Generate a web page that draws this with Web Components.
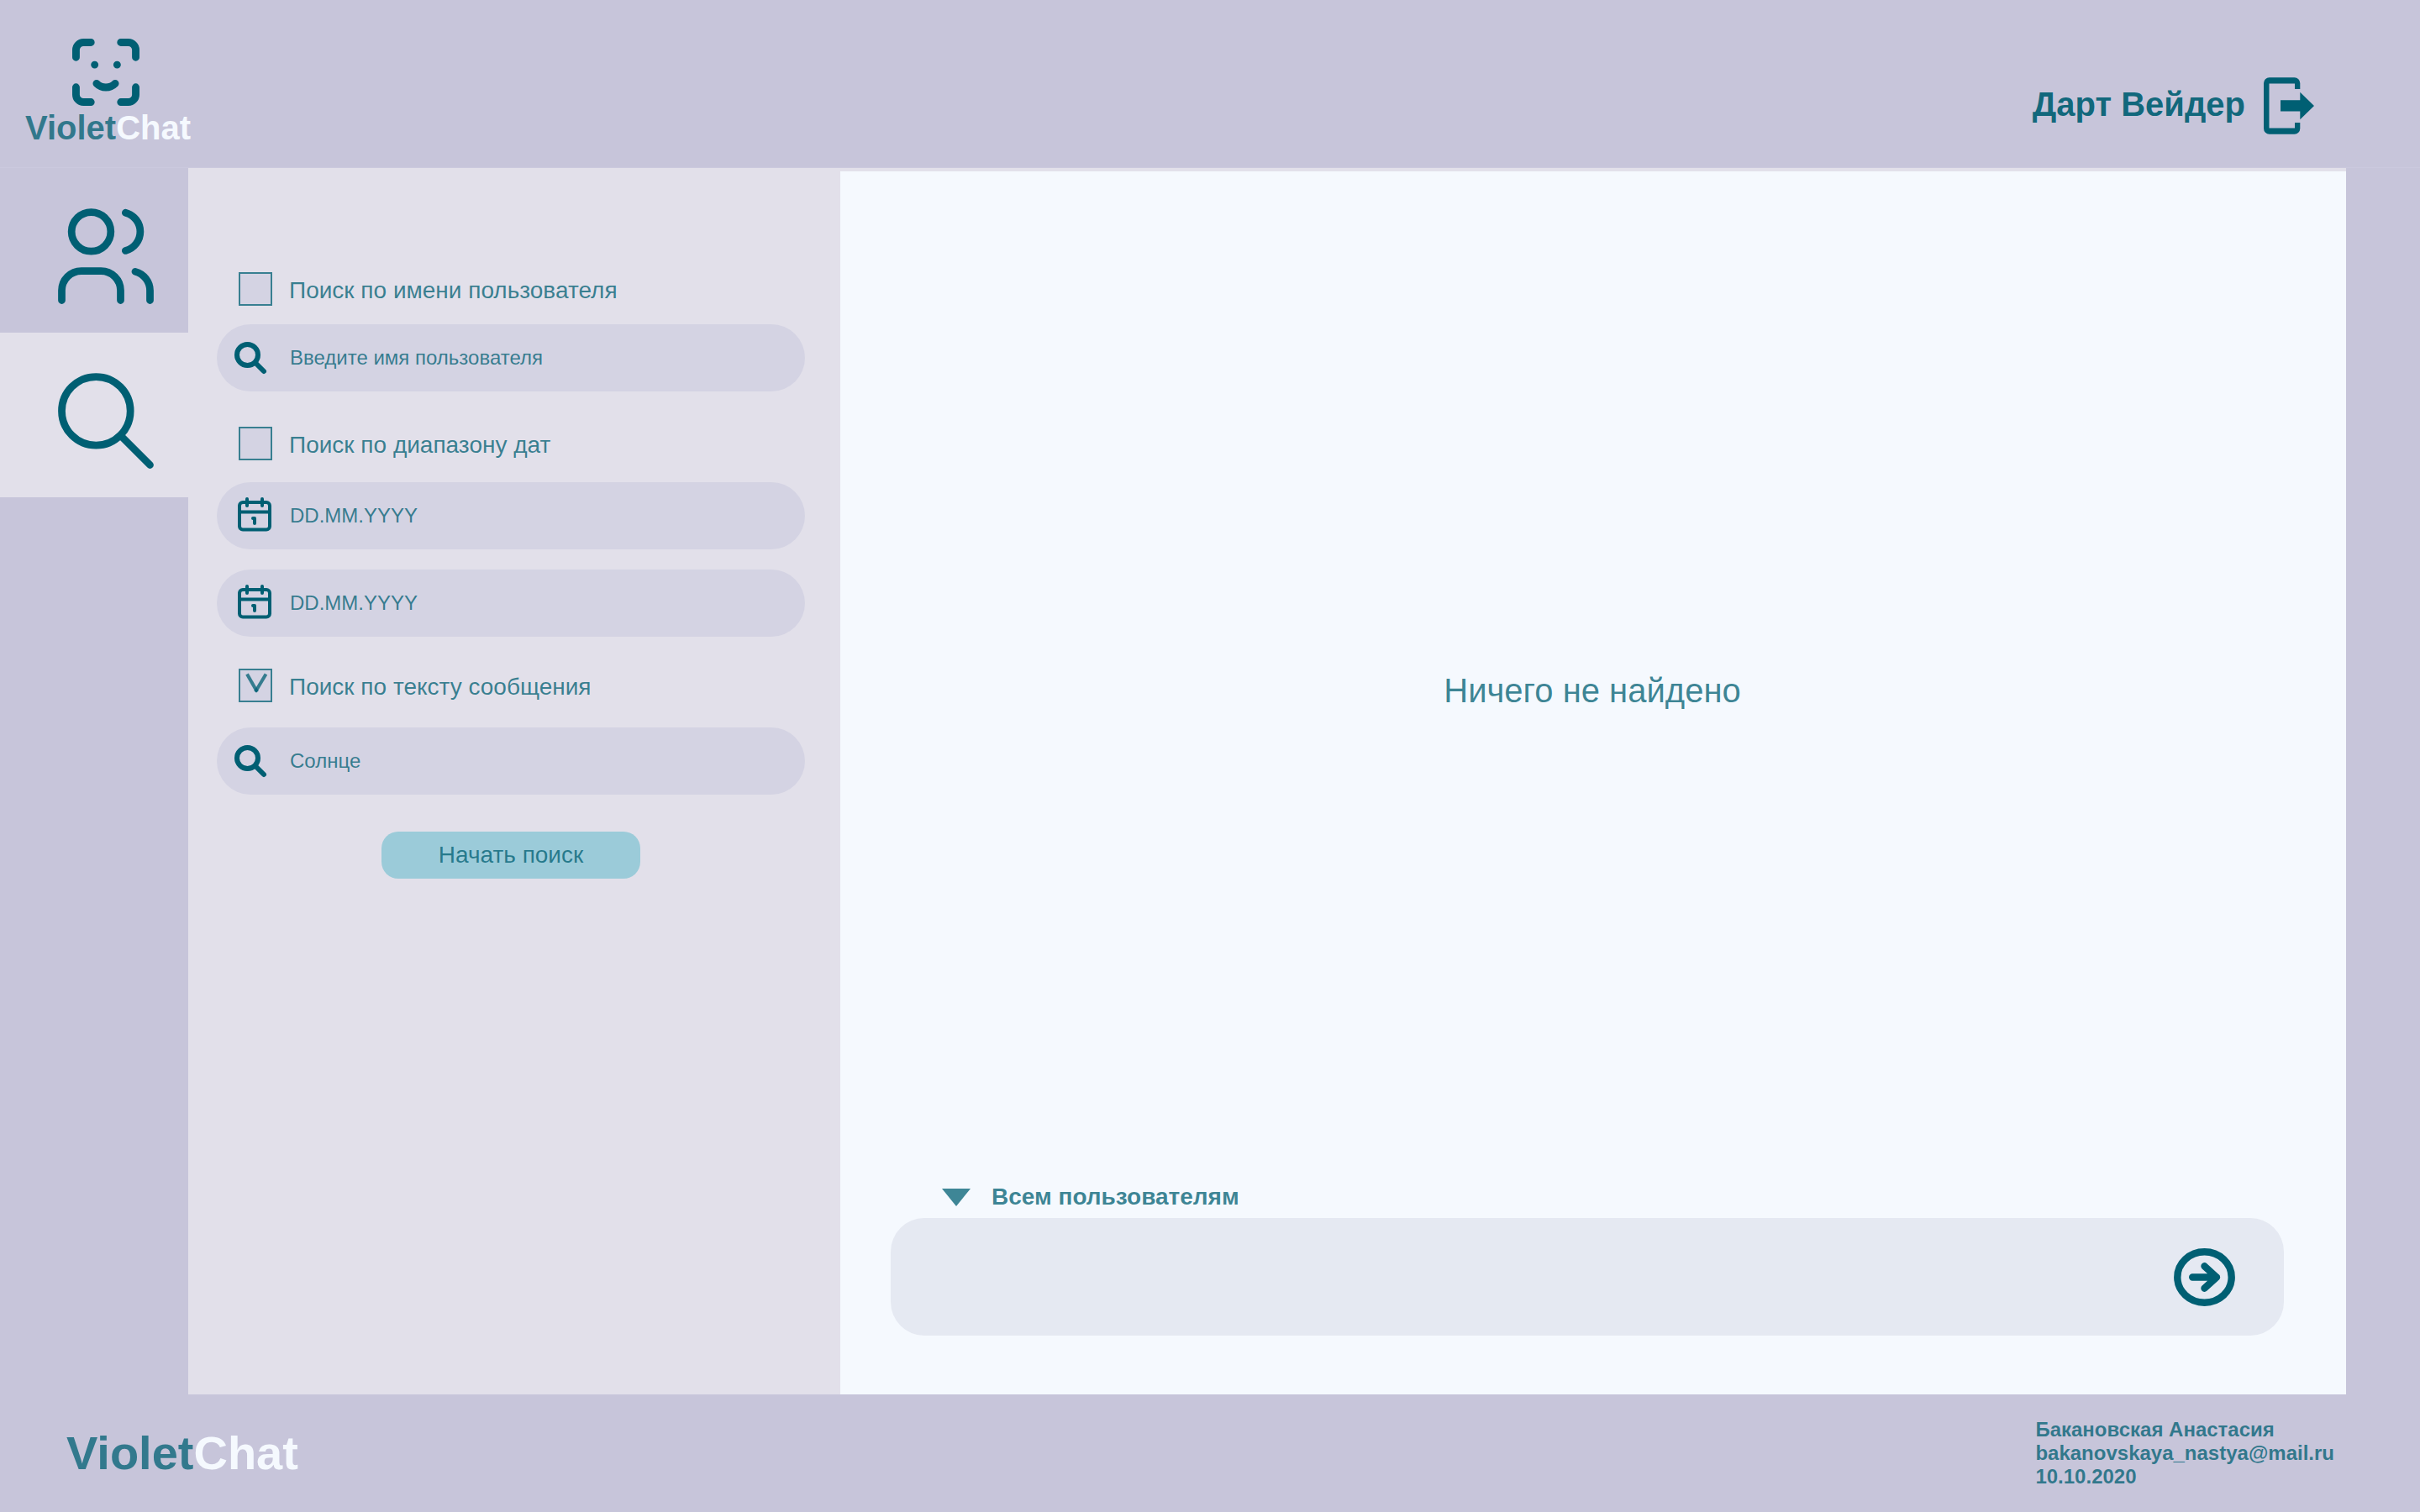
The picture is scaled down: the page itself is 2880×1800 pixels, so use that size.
<!DOCTYPE html>
<html lang="ru">
<head>
<meta charset="utf-8">
<meta name="viewport" content="width=device-width, initial-scale=1">
<title>VioletChat</title>
<style>
  :root {
    --lilac: #c7c5da;
    --panel: #e2e0ea;
    --field: #d4d3e3;
    --paper: #f5f9fe;
    --composer: #e5e9f2;
    --teal: #005f73;
    --teal-soft: rgba(0, 95, 115, .75);
    --button: #9bcbd9;
  }
  body {
    margin: 0;
    background: var(--lilac);
    color: var(--teal-soft);
    font: 28px/44px "Liberation Sans", Arial, sans-serif;
  }
</style>
</head>
<body>
<violet-app></violet-app>

<script>
  const base = `<style>
    *, *::before, *::after { box-sizing: border-box; }
    svg { display: block; flex: none; }
    input, button, select { font: inherit; color: inherit; margin: 0; padding: 0; border: 0; background: none; outline-offset: 4px; }
    button, select, a { cursor: pointer; }
  </style>`;

  function define(name, markup, setup) {
    const template = document.createElement('template');
    customElements.define(name, class extends HTMLElement {
      constructor() {
        super();
        this.attachShadow({ mode: 'open' });
      }
      connectedCallback() {
        if (this.shadowRoot.childNodes.length) return;
        template.innerHTML = base + markup;
        this.shadowRoot.append(template.content.cloneNode(true));
        if (setup) setup(this, this.shadowRoot);
      }
    });
  }

  const icons = {
    face: `<svg width="80" height="80" viewBox="3 3 18 18" fill="none" stroke="#005f73" stroke-width="2" stroke-linecap="round" stroke-linejoin="round">
      <path d="M4 8V6a2 2 0 0 1 2-2h2M4 16v2a2 2 0 0 0 2 2h2M16 4h2a2 2 0 0 1 2 2v2M16 20h2a2 2 0 0 0 2-2v-2M9 10h.01M15 10h.01M9.5 15a3.5 3.5 0 0 0 5 0"/></svg>`,
    exit: `<svg width="60" height="68" viewBox="0 0 60 68" fill="#005f73">
      <path d="M43.3 14V7A6.7 6.7 0 0 0 36.6.3H6.7A6.7 6.7 0 0 0 0 7v54a6.7 6.7 0 0 0 6.7 6.7h29.9a6.7 6.7 0 0 0 6.7-6.7v-7H37v6.5H6.5v-53H37V14Z"/>
      <path d="M20 27.3h23.3v-9.6L60 34 43.3 50.3v-9.8H20Z"/></svg>`,
    users: `<svg width="140" height="140" viewBox="0 0 24 24" fill="none" stroke="#005f73" stroke-width="1.5" stroke-linecap="round" stroke-linejoin="round">
      <circle cx="9" cy="7" r="4"/><path d="M3 21v-2a4 4 0 0 1 4-4h4a4 4 0 0 1 4 4v2M16 3.13a4 4 0 0 1 0 7.75M21 21v-2a4 4 0 0 0-3-3.85"/></svg>`,
    find: `<svg width="140" height="140" viewBox="0 0 24 24" fill="none" stroke="#005f73" stroke-width="1.5" stroke-linecap="round">
      <circle cx="10" cy="10" r="7"/><path d="M21 21l-6-6"/></svg>`,
    search: `<svg width="48" height="48" viewBox="0 0 48 48" fill="none" stroke="#005f73" stroke-width="6" stroke-linecap="round">
      <circle cx="18.5" cy="20.5" r="12.5"/><path d="M27.5 29.5L38 40"/></svg>`,
    calendar: `<svg width="48" height="48" viewBox="0 0 48 48" fill="none" stroke="#005f73" stroke-width="4" stroke-linecap="round" stroke-linejoin="round">
      <rect x="9" y="8" width="36" height="32.5" rx="4"/><path d="M18 4v8M36 4v8M9 19.5h36M25 27h2v6"/></svg>`,
    caret: `<svg width="34" height="21" viewBox="0 0 34 21" fill="#005f73" fill-opacity=".75"><path d="M0 0h34L17 21Z"/></svg>`,
    send: `<svg width="73" height="69" viewBox="0 0 73 69" fill="none" stroke="#005f73" stroke-width="8.4" stroke-linecap="round" stroke-linejoin="round">
      <ellipse cx="36.5" cy="34.5" rx="32.2" ry="30.2"/><path d="M22.2 34.5H51M36.5 21.3L51 34.5 36.5 47.7"/></svg>`
  };

  define('brand-name', `
    <style>
      :host { display: block; font-weight: 700; font-size: 40px; line-height: 40px; }
      :host([large]) { font-size: 56px; line-height: 56px; }
      span { color: var(--paper); }
    </style>
    Violet<span>Chat</span>`);

  define('app-header', `
    <style>
      :host { display: flex; justify-content: space-between; align-items: flex-start; height: 200px;
              padding: 46px 126px 0 30px; border-bottom: 1px solid #cbc9de; }
      .logo { display: flex; flex-direction: column; align-items: center; gap: 6px; }
      .logo svg { margin-right: 6px; }
      .user { display: flex; align-items: flex-start; gap: 22px; padding-top: 46px;
              font-weight: 700; font-size: 40px; line-height: 64px; color: rgba(0, 95, 115, .92); }
    </style>
    <div class="logo">${icons.face}<brand-name></brand-name></div>
    <div class="user"><slot></slot><button type="button" aria-label="Выйти">${icons.exit}</button></div>`);

  define('side-nav', `
    <style>
      :host { display: block; flex: none; width: 224px; }
      nav { display: flex; flex-direction: column; }
      button { display: block; width: 100%; padding: 35px 28px 21px 56px; }
      button[aria-current] { background: var(--panel); }
    </style>
    <nav>
      <button type="button" aria-label="Пользователи">${icons.users}</button>
      <button type="button" aria-label="Поиск" aria-current="page">${icons.find}</button>
    </nav>`);

  define('check-row', `
    <style>
      :host { display: block; padding-left: 26px; }
      label { display: flex; align-items: flex-start; gap: 20px; line-height: 44px; }
      .box { display: grid; }
      .box > * { grid-area: 1 / 1; }
      input { appearance: none; width: 40px; height: 40px; border: 2px solid #387f91; background: var(--field); }
      svg { pointer-events: none; visibility: hidden; }
      input:checked + svg { visibility: visible; }
    </style>
    <label>
      <span class="box">
        <input type="checkbox">
        <svg width="40" height="40" viewBox="0 0 40 40" fill="none" stroke="#005f73" stroke-width="4" stroke-linecap="butt">
          <path stroke-opacity=".75" d="M10 6.5L22 27.5"/><path stroke-opacity=".75" d="M32.5 6.5L20 27.5"/></svg>
      </span>
      <slot></slot>
    </label>`, (host, root) => {
      root.querySelector('input').checked = host.hasAttribute('checked');
    });

  define('search-field', `
    <style>
      :host { display: flex; align-items: center; gap: 21px; height: 80px; padding: 0 40px 0 18px;
              border-radius: 40px; background: var(--field); }
      input { flex: 1; min-width: 0; height: 48px; font-size: 24px; line-height: 28px; outline: none; }
      input::placeholder { color: inherit; opacity: 1; }
    </style>
    <span class="icon"></span><input type="text">`, (host, root) => {
      const input = root.querySelector('input');
      root.querySelector('.icon').innerHTML = icons[host.getAttribute('icon')];
      input.placeholder = host.getAttribute('placeholder') || '';
      input.value = host.getAttribute('value') || '';
      input.setAttribute('aria-label', host.getAttribute('label'));
    });

  define('search-panel', `
    <style>
      :host { display: block; flex: none; width: 776px; padding: 124px 42px 40px 34px; background: var(--panel); }
      form { display: flex; flex-direction: column; gap: 38px; }
      section { display: flex; flex-direction: column; }
      .by-name { gap: 18px; }
      .by-date { gap: 22px; margin-top: 4px; }
      .by-text { gap: 26px; }
      .range { display: flex; flex-direction: column; gap: 24px; }
      button { align-self: center; width: 308px; height: 56px; margin-top: 6px; border-radius: 20px;
               background: var(--button); line-height: 56px; }
    </style>
    <form>
      <section class="by-name">
        <check-row>Поиск по имени пользователя</check-row>
        <search-field icon="search" label="Имя пользователя" placeholder="Введите имя пользователя"></search-field>
      </section>
      <section class="by-date">
        <check-row>Поиск по диапазону дат</check-row>
        <div class="range">
          <search-field icon="calendar" label="Дата начала" placeholder="DD.MM.YYYY"></search-field>
          <search-field icon="calendar" label="Дата окончания" placeholder="DD.MM.YYYY"></search-field>
        </div>
      </section>
      <section class="by-text">
        <check-row checked>Поиск по тексту сообщения</check-row>
        <search-field icon="search" label="Текст сообщения" value="Солнце"></search-field>
      </section>
      <button type="button">Начать поиск</button>
    </form>`);

  define('message-composer', `
    <style>
      :host { display: block; }
      .to { display: flex; align-items: center; gap: 25px; height: 52px; padding: 2px 0 0 61px; }
      select { appearance: none; font-weight: 700; height: 44px; }
      .bar { display: flex; align-items: center; gap: 40px; height: 140px; padding: 0 58px 0 40px;
             border-radius: 40px; background: var(--composer); }
      .bar input { flex: 1; min-width: 0; height: 69px; outline: none; }
    </style>
    <label class="to">${icons.caret}<select aria-label="Получатель"><option>Всем пользователям</option></select></label>
    <div class="bar">
      <input type="text" aria-label="Сообщение">
      <button type="button" aria-label="Отправить">${icons.send}</button>
    </div>`);

  define('chat-pane', `
    <style>
      :host { display: flex; flex-direction: column; flex: 1; min-width: 0; padding: 0 74px 70px 60px;
              border-top: 4px solid var(--panel); background: var(--paper); }
      .empty { flex: 1; display: flex; align-items: center; justify-content: center; padding: 42px 0 0 12px; }
      p { margin: 0; font-size: 40px; line-height: 48px; }
    </style>
    <div class="empty"><p><slot></slot></p></div>
    <message-composer></message-composer>`);

  define('app-footer', `
    <style>
      :host { display: flex; align-items: center; justify-content: space-between; height: 140px; padding: 0 102px 0 79px; }
      address { font-style: normal; font-weight: 700; font-size: 24px; line-height: 28px; }
      address > * { display: block; color: inherit; text-decoration: none; }
    </style>
    <brand-name large></brand-name>
    <address>
      <span>Бакановская Анастасия</span>
      <a href="mailto:bakanovskaya_nastya@mail.ru">bakanovskaya_nastya@mail.ru</a>
      <time datetime="2020-10-10">10.10.2020</time>
    </address>`);

  define('violet-app', `
    <style>
      :host { display: flex; flex-direction: column; min-height: 100vh; }
      main { flex: 1; display: flex; padding-right: 88px; }
    </style>
    <app-header>Дарт Вейдер</app-header>
    <main>
      <side-nav></side-nav>
      <search-panel></search-panel>
      <chat-pane>Ничего не найдено</chat-pane>
    </main>
    <app-footer></app-footer>`);
</script>
</body>
</html>
